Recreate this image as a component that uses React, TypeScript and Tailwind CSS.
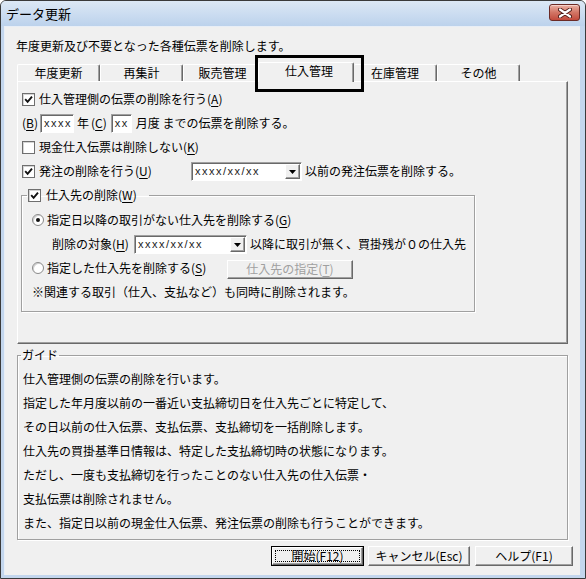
import React from "react";

function Key({ k }: { k: string }) {
  return (
    <>
      (<span className="underline underline-offset-[2px]">{k}</span>)
    </>
  );
}

function Checkbox({ checked = false }: { checked?: boolean }) {
  return (
    <span className="flex h-[13px] w-[13px] shrink-0 items-center justify-center border border-[#6f6f6f] bg-white shadow-[inset_1px_1px_0_#d4d4d4]">
      {checked && (
        <svg width="9" height="9" viewBox="0 0 9 9">
          <path d="M1.2 4.2 L3.6 6.8 L8 1.6" fill="none" stroke="#111" strokeWidth="1.9" />
        </svg>
      )}
    </span>
  );
}

function Radio({ checked = false }: { checked?: boolean }) {
  return (
    <span className="flex h-[12px] w-[12px] shrink-0 items-center justify-center rounded-full border border-[#8a8a8a] bg-white shadow-[inset_1px_1px_0_#d0d0d0]">
      {checked && <span className="h-[4px] w-[4px] rounded-full bg-[#111]" />}
    </span>
  );
}

function Combo({ className }: { className: string }) {
  return (
    <div
      className={`flex h-[19px] shrink-0 items-center border border-t-[#a0a0a0] border-l-[#a0a0a0] border-r-white border-b-white bg-white shadow-[inset_1px_1px_0_#696969] ${className}`}
    >
      <span className="flex-1 pl-[3px] font-['Liberation_Sans',sans-serif] text-[11px] leading-[15px] tracking-[1.5px] text-[#222]">
        xxxx/xx/xx
      </span>
      <span className="mr-px mt-px flex h-[15px] w-[15px] items-center justify-center border border-t-white border-l-white border-r-[#696969] border-b-[#696969] bg-[#f0f0f0] shadow-[inset_-1px_-1px_0_#a0a0a0]">
        <svg width="7" height="4" viewBox="0 0 7 4">
          <path d="M0 0 H7 L3.5 4 Z" fill="#000" />
        </svg>
      </span>
    </div>
  );
}

function TextBox({ className, value }: { className: string; value: string }) {
  return (
    <span
      className={`flex h-[19px] shrink-0 items-center border border-t-[#a0a0a0] border-l-[#a0a0a0] border-r-white border-b-white bg-white pl-[3px] font-['Liberation_Sans',sans-serif] text-[11px] tracking-[1.5px] text-[#222] shadow-[inset_1px_1px_0_#696969] ${className}`}
    >
      {value}
    </span>
  );
}

export default function App() {
  return (
    <div className="flex h-[579px] w-[586px] flex-col whitespace-nowrap rounded-t-[6px] border border-[#3a3a3a] bg-[#c3d6ed] font-['Noto_Sans_CJK_JP','Noto_Sans',sans-serif] text-[12px] leading-[16px] text-black">
      {/* title bar */}
      <div className="flex h-[25px] items-center justify-between rounded-t-[5px] bg-gradient-to-b from-[#dce8f5] to-[#bcd2ec] pl-[5px] pr-[5px]">
        <span className="text-[13px]">データ更新</span>
        <span className="mb-[2px] flex h-[17px] w-[31px] items-center justify-center rounded-[3px] border border-[#6b2a25] bg-gradient-to-b from-[#eab0a4] via-[#d27565] to-[#c24a3c] shadow-[inset_0_1px_0_#f6d2ca]">
          <svg width="14" height="10" viewBox="0 0 14 10">
            <path d="M2 1.5 L12 8.5 M12 1.5 L2 8.5" stroke="#4a1814" strokeWidth="4" strokeLinecap="round" />
            <path d="M2 1.5 L12 8.5 M12 1.5 L2 8.5" stroke="#fff" strokeWidth="2.2" strokeLinecap="round" />
          </svg>
        </span>
      </div>

      {/* client */}
      <div className="mb-[3px] ml-[3px] mr-[5px] flex flex-1 flex-col border-l border-t border-l-[#e8eef6] border-t-[#e8eef6] bg-[#f0f0f0]">
        <div className="mt-[11px] h-[16px] pl-[11px]">年度更新及び不要となった各種伝票を削除します。</div>

        {/* tabs */}
        <div className="relative ml-[12px] mt-[8px] flex h-[19px] items-start">
          <div className="mt-[2px] flex h-[17px] w-[83px] items-center justify-center rounded-t-[2px] border-l border-r border-t border-l-white border-r-[#696969] border-t-white shadow-[inset_-1px_0_0_#a0a0a0]">
            年度更新
          </div>
          <div className="mt-[2px] flex h-[17px] w-[83px] items-center justify-center rounded-t-[2px] border-l border-r border-t border-l-white border-r-[#696969] border-t-white shadow-[inset_-1px_0_0_#a0a0a0]">
            再集計
          </div>
          <div className="mt-[2px] flex h-[17px] w-[83px] items-center justify-center rounded-t-[2px] border-l border-r border-t border-l-white border-r-[#696969] border-t-white pr-[4px] shadow-[inset_-1px_0_0_#a0a0a0]">
            販売管理
          </div>
          <div className="relative z-10 -ml-[8px] flex h-[20px] w-[96px] items-center justify-center rounded-t-[2px] border-l border-r border-t border-l-white border-r-[#696969] border-t-white bg-[#f0f0f0] pb-[3px] pl-[6px] shadow-[inset_-1px_0_0_#a0a0a0]">
            仕入管理
          </div>
          <div className="mt-[2px] flex h-[17px] w-[83px] items-center justify-center rounded-t-[2px] border-r border-t border-r-[#696969] border-t-white shadow-[inset_-1px_0_0_#a0a0a0]">
            在庫管理
          </div>
          <div className="mt-[2px] flex h-[17px] w-[83px] items-center justify-center rounded-t-[2px] border-l border-r border-t border-l-white border-r-[#696969] border-t-white shadow-[inset_-1px_0_0_#a0a0a0]">
            その他
          </div>
          <div className="absolute left-[238px] top-[-7px] z-20 h-[37px] w-[109px] border-[3px] border-black" />
        </div>

        {/* panel */}
        <div className="ml-[12px] h-[263px] w-[551px] border border-b-[#696969] border-l-white border-r-[#696969] border-t-white pt-[5px] shadow-[inset_-1px_-1px_0_#a0a0a0]">
          <div className="pl-[4px]">
            <div className="flex h-[24px] items-center gap-[4px]">
              <Checkbox checked />
              <span>
                仕入管理側の伝票の削除を行う<Key k="A" />
              </span>
            </div>
            <div className="flex h-[24px] items-center">
              <span>
                <Key k="B" />
              </span>
              <TextBox className="ml-[2px] w-[34px]" value="xxxx" />
              <span className="ml-[3px]">年</span>
              <span className="ml-[2px]">
                <Key k="C" />
              </span>
              <TextBox className="ml-[4px] w-[21px]" value="xx" />
              <span className="ml-[4px]">月度 までの伝票を削除する。</span>
            </div>
            <div className="flex h-[24px] items-center gap-[4px]">
              <Checkbox />
              <span>
                現金仕入伝票は削除しない<Key k="K" />
              </span>
            </div>
            <div className="flex h-[24px] items-center">
              <Checkbox checked />
              <span className="ml-[4px] w-[152px]">
                発注の削除を行う<Key k="U" />
              </span>
              <Combo className="w-[111px]" />
              <span className="ml-[3px]">以前の発注伝票を削除する。</span>
            </div>
          </div>

          <fieldset className="ml-[3px] mt-[4px] w-[454px] border border-[#a0a0a0] pb-[7px] pt-[5px] shadow-[inset_1px_1px_0_#fff,1px_1px_0_#fff]">
            <legend className="ml-[5px] pl-[1px] pr-[12px]">
              <span className="flex h-[16px] items-center gap-[5px]">
                <Checkbox checked />
                <span>
                  仕入先の削除<Key k="W" />
                </span>
              </span>
            </legend>
            <div className="flex h-[24px] items-center gap-[3px] pl-[10px]">
              <Radio checked />
              <span>
                指定日以降の取引がない仕入先を削除する<Key k="G" />
              </span>
            </div>
            <div className="flex h-[24px] items-center pl-[30px]">
              <span className="w-[82px]">
                削除の対象<Key k="H" />
              </span>
              <Combo className="w-[113px]" />
              <span className="ml-[3px]">以降に取引が無く、買掛残が０の仕入先</span>
            </div>
            <div className="flex h-[24px] items-center pl-[10px]">
              <Radio />
              <span className="ml-[3px] w-[180px]">
                指定した仕入先を削除する<Key k="S" />
              </span>
              <span className="mt-[2px] flex h-[19px] w-[126px] items-center justify-center border border-b-[#696969] border-l-white border-r-[#696969] border-t-white text-[#a0a0a0] shadow-[inset_-1px_-1px_0_#a0a0a0]">
                仕入先の指定<Key k="T" />
              </span>
            </div>
            <div className="flex h-[24px] items-center pl-[10px]">※関連する取引（仕入、支払など）も同時に削除されます。</div>
          </fieldset>
        </div>

        {/* guide */}
        <fieldset className="ml-[12px] mt-[3px] w-[551px] border border-[#a0a0a0] pb-[4px] pt-[4px] shadow-[inset_1px_1px_0_#fff,1px_1px_0_#fff]">
          <legend className="ml-[3px] h-[16px] px-[1px]">ガイド</legend>
          <div className="pl-[5px]">
            <div className="flex h-[24px] items-center">仕入管理側の伝票の削除を行います。</div>
            <div className="flex h-[24px] items-center">指定した年月度以前の一番近い支払締切日を仕入先ごとに特定して、</div>
            <div className="flex h-[24px] items-center">その日以前の仕入伝票、支払伝票、支払締切を一括削除します。</div>
            <div className="flex h-[24px] items-center">仕入先の買掛基準日情報は、特定した支払締切時の状態になります。</div>
            <div className="flex h-[24px] items-center">ただし、一度も支払締切を行ったことのない仕入先の仕入伝票・</div>
            <div className="flex h-[24px] items-center">支払伝票は削除されません。</div>
            <div className="flex h-[24px] items-center">また、指定日以前の現金仕入伝票、発注伝票の削除も行うことができます。</div>
          </div>
        </fieldset>

        {/* buttons */}
        <div className="mt-[6px] flex justify-end gap-[4px] pr-[7px]">
          <span className="flex h-[20px] w-[93px] border border-black">
            <span className="flex flex-1 border border-b-[#696969] border-l-white border-r-[#696969] border-t-white p-[2px] shadow-[inset_-1px_-1px_0_#a0a0a0]">
              <span className="flex flex-1 items-center justify-center border border-dotted border-black">
                開始(F12)
              </span>
            </span>
          </span>
          <span className="flex h-[20px] w-[102px] items-center justify-center border border-b-[#696969] border-l-white border-r-[#696969] border-t-white shadow-[inset_-1px_-1px_0_#a0a0a0]">
            キャンセル(Esc)
          </span>
          <span className="ml-[1px] flex h-[20px] w-[98px] items-center justify-center border border-b-[#696969] border-l-white border-r-[#696969] border-t-white shadow-[inset_-1px_-1px_0_#a0a0a0]">
            ヘルプ(F1)
          </span>
        </div>
      </div>
    </div>
  );
}
